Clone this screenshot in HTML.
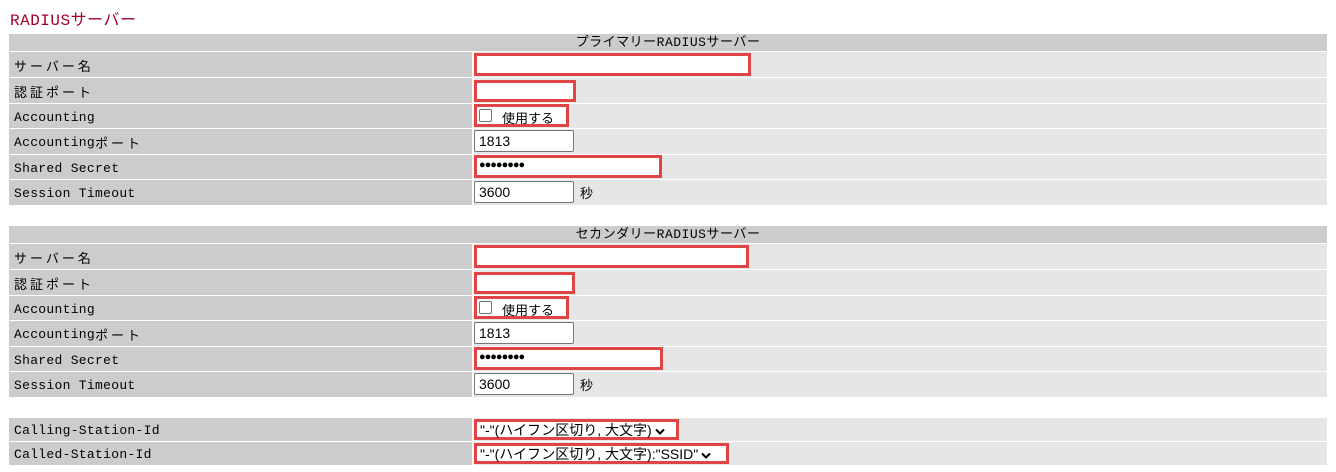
<!DOCTYPE html>
<html><head><meta charset="utf-8"><style>
body{margin:0;width:1336px;height:472px;background:#fff;position:relative;overflow:hidden;font-family:"Liberation Mono","Noto Sans CJK JP",monospace;font-size:13px;color:#000}
.a{position:absolute}
.t{left:10px;top:6px;color:#a0002a;font-size:16px;letter-spacing:0.5px}
.h{left:9px;width:1318px;height:17px;background:#ccc;text-align:center;line-height:17px;letter-spacing:0.5px}
.l{left:9px;width:463px;background:#ccc;padding-left:5px;box-sizing:border-box;letter-spacing:0.3px;display:flex;align-items:center;padding-top:2px}
.j{letter-spacing:3px}
.v{left:474px;width:853px;background:#e6e6e6}
.in{background:#fff;border:1px solid #767676;border-radius:2px;box-sizing:border-box;font-family:"Liberation Sans",sans-serif;font-size:14px;line-height:20px;padding-left:4px}
.r{border:3px solid #e04444;border-radius:0;box-sizing:border-box;background:#fff}
.cb{width:13px;height:13px;border:1px solid #767676;border-radius:2px;background:#fff;box-sizing:border-box}
.s{font-family:"Liberation Sans","Noto Sans CJK JP",sans-serif;font-size:14px;line-height:16px;padding-left:3px;white-space:nowrap}
.s svg{vertical-align:middle;margin-left:3px}
</style></head><body>
<div class="a t">RADIUSサーバー</div>

<div class="a h" style="top:34px">プライマリーRADIUSサーバー</div>
<div class="a l" style="top:52px;height:25px"><span class="j">サーバー名</span></div><div class="a v" style="top:52px;height:25px"></div>
<div class="a l" style="top:78px;height:25px"><span class="j">認証ポート</span></div><div class="a v" style="top:78px;height:25px"></div>
<div class="a l" style="top:104px;height:24px">Accounting</div><div class="a v" style="top:104px;height:24px"></div>
<div class="a l" style="top:129px;height:25px">Accounting<span class="j">ポート</span></div><div class="a v" style="top:129px;height:25px"></div>
<div class="a l" style="top:155px;height:24px">Shared Secret</div><div class="a v" style="top:155px;height:24px"></div>
<div class="a l" style="top:180px;height:25px">Session Timeout</div><div class="a v" style="top:180px;height:25px"></div>
<div class="a r" style="left:474px;top:53px;width:277px;height:23px"></div>
<div class="a r" style="left:474px;top:80px;width:102px;height:22px"></div>
<div class="a r" style="left:474px;top:104px;width:95px;height:23px"></div>
<div class="a cb" style="left:479px;top:109px"></div><div class="a" style="left:502px;top:109px;font-family:'Noto Sans CJK JP',sans-serif;font-size:13px;line-height:18px">使用する</div>
<div class="a in" style="left:474px;top:130px;width:100px;height:22px">1813</div>
<div class="a r" style="left:474px;top:155px;width:188px;height:23px"></div>
<div class="a" style="left:479px;top:159px;font-size:11px;font-family:'Liberation Sans',sans-serif;letter-spacing:-1px">●●●●●●●●</div>
<div class="a in" style="left:474px;top:181px;width:100px;height:22px">3600</div>
<div class="a" style="left:580px;top:183px;font-family:'Noto Sans CJK JP',sans-serif;font-size:13px">秒</div>

<div class="a h" style="top:226px">セカンダリーRADIUSサーバー</div>
<div class="a l" style="top:244px;height:25px"><span class="j">サーバー名</span></div><div class="a v" style="top:244px;height:25px"></div>
<div class="a l" style="top:270px;height:25px"><span class="j">認証ポート</span></div><div class="a v" style="top:270px;height:25px"></div>
<div class="a l" style="top:296px;height:24px">Accounting</div><div class="a v" style="top:296px;height:24px"></div>
<div class="a l" style="top:321px;height:25px">Accounting<span class="j">ポート</span></div><div class="a v" style="top:321px;height:25px"></div>
<div class="a l" style="top:347px;height:24px">Shared Secret</div><div class="a v" style="top:347px;height:24px"></div>
<div class="a l" style="top:372px;height:25px">Session Timeout</div><div class="a v" style="top:372px;height:25px"></div>
<div class="a r" style="left:474px;top:245px;width:275px;height:23px"></div>
<div class="a r" style="left:474px;top:272px;width:101px;height:22px"></div>
<div class="a r" style="left:474px;top:296px;width:95px;height:23px"></div>
<div class="a cb" style="left:479px;top:301px"></div><div class="a" style="left:502px;top:301px;font-family:'Noto Sans CJK JP',sans-serif;font-size:13px;line-height:18px">使用する</div>
<div class="a in" style="left:474px;top:322px;width:100px;height:22px">1813</div>
<div class="a r" style="left:474px;top:347px;width:189px;height:23px"></div>
<div class="a" style="left:479px;top:351px;font-size:11px;font-family:'Liberation Sans',sans-serif;letter-spacing:-1px">●●●●●●●●</div>
<div class="a in" style="left:474px;top:373px;width:100px;height:22px">3600</div>
<div class="a" style="left:580px;top:375px;font-family:'Noto Sans CJK JP',sans-serif;font-size:13px">秒</div>

<div class="a l" style="top:418px;height:23px">Calling-Station-Id</div><div class="a v" style="top:418px;height:23px"></div>
<div class="a l" style="top:442px;height:23px">Called-Station-Id</div><div class="a v" style="top:442px;height:23px"></div>
<div class="a r s" style="left:474px;top:419px;width:205px;height:21px">"-"(ハイフン区切り, 大文字)<svg width="10" height="7" viewBox="0 0 10 7"><path d="M1 1.5L5 5.5L9 1.5" stroke="#000" stroke-width="2" fill="none"/></svg></div>
<div class="a r s" style="left:474px;top:443px;width:255px;height:21px">"-"(ハイフン区切り, 大文字):"SSID"<svg width="10" height="7" viewBox="0 0 10 7"><path d="M1 1.5L5 5.5L9 1.5" stroke="#000" stroke-width="2" fill="none"/></svg></div>
</body></html>
